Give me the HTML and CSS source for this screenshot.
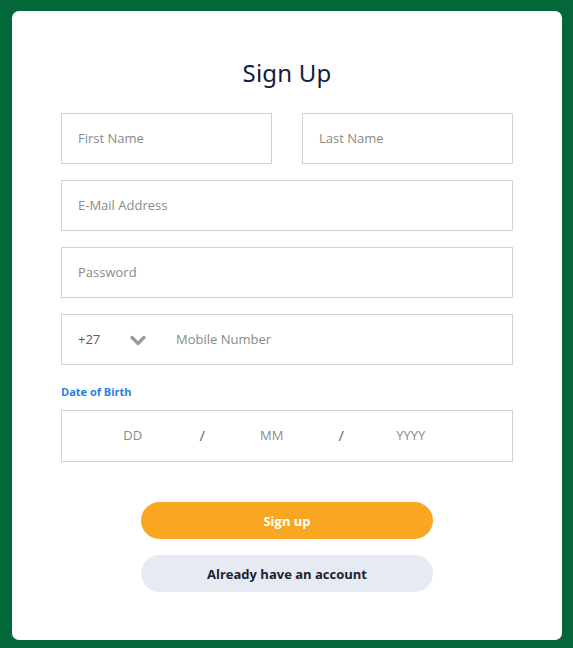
FILE: index.html
```html
<!DOCTYPE html>
<html lang="en">
<head>
<meta charset="utf-8">
<title>Sign Up</title>
<link rel="stylesheet" href="styles.css">
</head>
<body>
<div class="page">
  <main class="card">
    <h1 class="title">Sign Up</h1>
    <form class="form">
      <div class="row two">
        <div class="field"><span class="ph">First Name</span></div>
        <div class="field"><span class="ph">Last Name</span></div>
      </div>
      <div class="field"><span class="ph">E-Mail Address</span></div>
      <div class="field"><span class="ph">Password</span></div>
      <div class="field phone">
        <span class="code">+27</span>
        <svg class="chev" width="16" height="11" viewBox="0 0 16 11"><path d="M2 2.5 L8 8.5 L14 2.5" fill="none" stroke="#9a9a9a" stroke-width="3.2" stroke-linecap="round" stroke-linejoin="round"/></svg>
        <span class="ph">Mobile Number</span>
      </div>
      <div class="dob">
        <label class="label">Date of Birth</label>
        <div class="field date">
          <span class="seg">DD</span>
          <span class="slash">/</span>
          <span class="seg">MM</span>
          <span class="slash">/</span>
          <span class="seg">YYYY</span>
        </div>
      </div>
      <div class="actions">
        <button type="button" class="btn primary">Sign up</button>
        <button type="button" class="btn secondary">Already have an account</button>
      </div>
    </form>
  </main>
</div>
</body>
</html>
```

FILE: styles.css
```css
* { box-sizing: border-box; }
html, body { margin: 0; padding: 0; }
body {
  background: #03673a;
  font-family: "Open Sans", "Noto Sans", Arial, sans-serif;
  width: 573px;
  height: 648px;
}
.page {
  padding: 11px 11px 8px 12px;
  height: 648px;
}
.card {
  background: #ffffff;
  border-radius: 7px;
  height: 629px;
  padding: 45px 49px 0 49px;
}
.title {
  margin: 0 0 24px 0;
  text-align: center;
  font-family: "Noto Sans", sans-serif;
  font-weight: 400;
  font-size: 24px;
  line-height: 33px;
  color: #131d3b;
  letter-spacing: 0.2px;
}
.form {
  display: flex;
  flex-direction: column;
  gap: 16px;
}
.row.two {
  display: grid;
  grid-template-columns: 1fr 1fr;
  gap: 30px;
}
.field {
  height: 51px;
  border: 1px solid #d2d2d2;
  display: flex;
  align-items: center;
  padding: 0 0 2px 16px;
  font-size: 13px;
}
.ph { color: #8a8a8a; }
.phone .code { color: #5a5a5a; width: 52px; }
.phone .chev { margin-right: 30px; margin-top: 4px; }
.dob {
  display: flex;
  flex-direction: column;
  gap: 11px;
  margin-top: 3px;
}
.label {
  font-size: 11px;
  font-weight: 700;
  color: #2a7de1;
  line-height: 15px;
}
.field.date {
  height: 52px;
  display: grid;
  grid-template-columns: repeat(5, 69.5px);
  padding-left: 36px;
  color: #8a8a8a;
}
.seg, .slash { text-align: center; }
.slash { color: #666; font-size: 15px; }
.actions {
  display: flex;
  flex-direction: column;
  align-items: center;
  gap: 16px;
  margin-top: 24px;
}
.btn {
  width: 292px;
  height: 37px;
  border: none;
  border-radius: 19px;
  font-family: "Open Sans", "Noto Sans", Arial, sans-serif;
  font-size: 13px;
  font-weight: 700;
  cursor: pointer;
}
.primary { background: #f9a723; color: #ffffff; }
.secondary { background: #e5eaf3; color: #1c2233; }
```
